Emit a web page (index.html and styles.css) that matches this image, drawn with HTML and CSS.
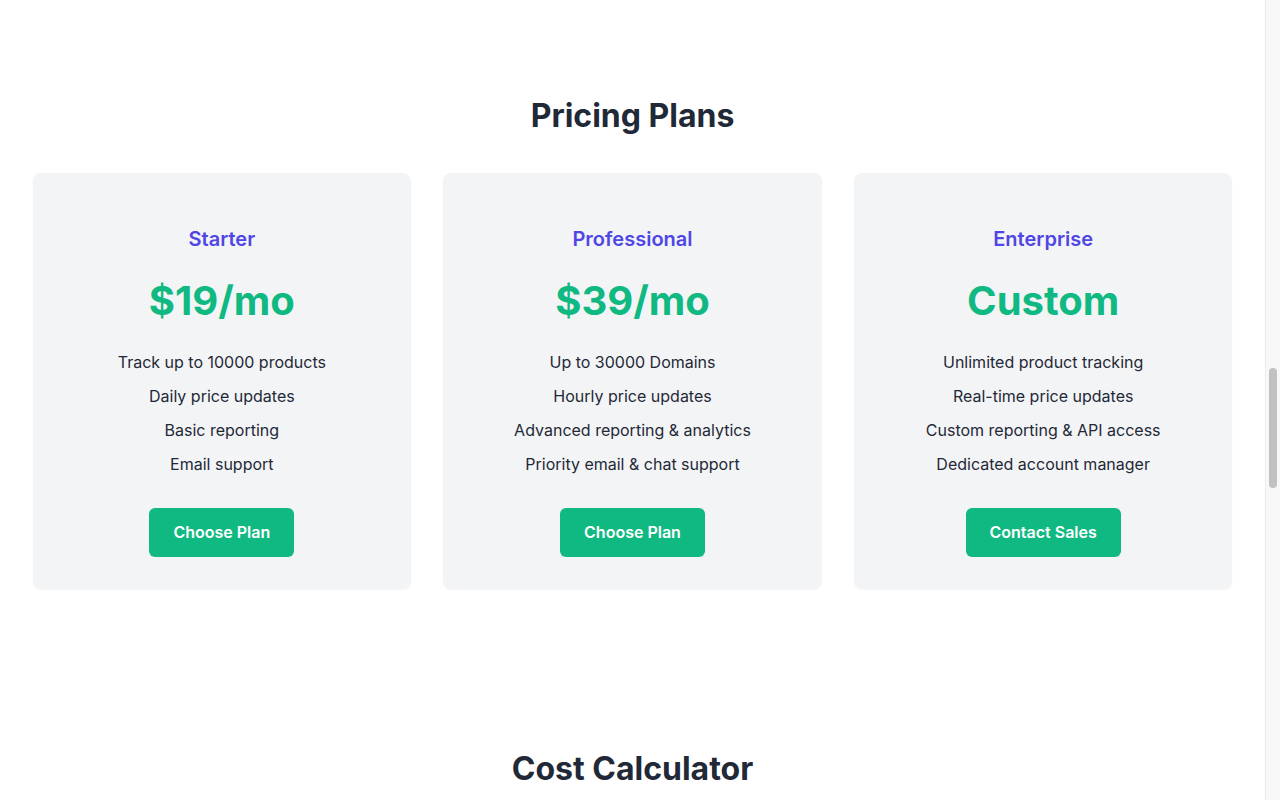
FILE: index.html
```html
<!DOCTYPE html>
<html lang="en">
<head>
    <meta charset="UTF-8">
    <meta name="viewport" content="width=device-width, initial-scale=1.0">
    <title>Price Tracker - Pricing</title>
    <link rel="stylesheet" href="styles.css">
</head>
<body>
    <section class="section pricing">
        <h2>Pricing Plans</h2>
        <div class="plans">
            <div class="plan">
                <h3>Starter</h3>
                <p class="price">$19/mo</p>
                <ul>
                    <li>Track up to 10000 products</li>
                    <li>Daily price updates</li>
                    <li>Basic reporting</li>
                    <li>Email support</li>
                </ul>
                <a href="#" class="button">Choose Plan</a>
            </div>
            <div class="plan">
                <h3>Professional</h3>
                <p class="price">$39/mo</p>
                <ul>
                    <li>Up to 30000 Domains</li>
                    <li>Hourly price updates</li>
                    <li>Advanced reporting &amp; analytics</li>
                    <li>Priority email &amp; chat support</li>
                </ul>
                <a href="#" class="button">Choose Plan</a>
            </div>
            <div class="plan">
                <h3>Enterprise</h3>
                <p class="price">Custom</p>
                <ul>
                    <li>Unlimited product tracking</li>
                    <li>Real-time price updates</li>
                    <li>Custom reporting &amp; API access</li>
                    <li>Dedicated account manager</li>
                </ul>
                <a href="#" class="button">Contact Sales</a>
            </div>
        </div>
    </section>

    <section class="section calculator">
        <h2>Cost Calculator</h2>
        <div class="calc-box">
            <label for="products">Number of products</label>
            <input type="number" id="products" value="1000">
            <label for="frequency">Update frequency</label>
            <select id="frequency">
                <option>Daily</option>
                <option>Hourly</option>
                <option>Real-time</option>
            </select>
            <p class="estimate">Estimated cost: <strong>$19/mo</strong></p>
        </div>
    </section>

    <!-- window scrollbar -->
    <div class="scroll-rail" aria-hidden="true"><div class="scroll-thumb"></div></div>
</body>
</html>
```

FILE: styles.css
```css
body {
    font-family: Inter, "Noto Sans", sans-serif;
    margin: 0;
    padding: 0 15px 0 0;
    background-color: #fff;
    color: #1f2937;
}

.scroll-rail {
    position: fixed;
    top: 0;
    right: 0;
    width: 14px;
    height: 100vh;
    background-color: #f8f8f8;
    border-left: 1px solid #ebebeb;
}

.scroll-thumb {
    position: absolute;
    top: 368px;
    left: 3px;
    width: 8px;
    height: 120px;
    border-radius: 4px;
    background-color: #c1c1c1;
}

.section {
    max-width: 1200px;
    margin: 0 auto;
    padding: 80px 0;
}

.pricing {
    padding-top: 96px;
}

.section h2 {
    font-size: 32px;
    line-height: 40px;
    font-weight: 700;
    text-align: center;
    margin: 0 0 37px;
    color: #1f2937;
}

.plans {
    display: grid;
    grid-template-columns: repeat(3, 1fr);
    gap: 32px;
}

.plan {
    background-color: #f3f4f6;
    border-radius: 8px;
    padding: 32px;
    text-align: center;
    box-shadow: 0 1px 2px rgba(0, 0, 0, 0.04);
}

.plan h3 {
    font-size: 20px;
    line-height: 28px;
    font-weight: 600;
    color: #4f46e5;
    margin: 20px 0;
}

.price {
    font-size: 40px;
    line-height: 56px;
    font-weight: 700;
    color: #10b981;
    margin: 0;
}

.plan ul {
    list-style: none;
    padding: 0;
    margin: 21px 0 32px;
}

.plan li {
    font-size: 16px;
    line-height: 24px;
    margin-bottom: 10px;
}

.plan li:last-child {
    margin-bottom: 0;
}

.button {
    display: inline-block;
    background-color: #10b981;
    color: white;
    font-weight: 600;
    font-size: 16px;
    line-height: 25px;
    padding: 12px 24px;
    border-radius: 6px;
    text-decoration: none;
}

.calc-box {
    max-width: 600px;
    margin: 0 auto;
    padding: 32px;
    background-color: #f3f4f6;
    border-radius: 8px;
}

.calc-box label {
    display: block;
    font-weight: 600;
    margin: 16px 0 8px;
}

.calc-box input,
.calc-box select {
    width: 100%;
    box-sizing: border-box;
    padding: 10px;
    font-size: 16px;
    border: 1px solid #d1d5db;
    border-radius: 6px;
}

.estimate {
    margin-top: 24px;
    font-size: 18px;
}
```
